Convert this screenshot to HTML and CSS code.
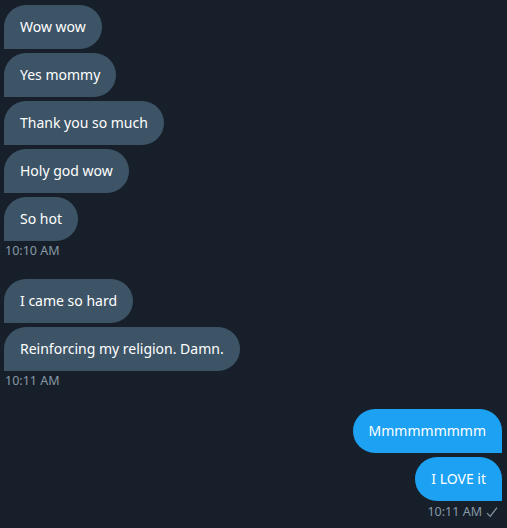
FILE: index.html
```html
<!DOCTYPE html>
<html lang="en">
<head>
  <meta charset="UTF-8">
  <meta name="viewport" content="width=device-width, initial-scale=1.0">
  <title>Messages</title>
  <link rel="stylesheet" href="styles.css">
</head>
<body>
  <div class="chat">
    <div class="group received">
      <div class="bubble">Wow wow</div>
      <div class="bubble">Yes mommy</div>
      <div class="bubble">Thank you so much</div>
      <div class="bubble">Holy god wow</div>
      <div class="bubble">So hot</div>
      <div class="time">10:10 AM</div>
    </div>

    <div class="group received">
      <div class="bubble">I came so hard</div>
      <div class="bubble">Reinforcing my religion. Damn.</div>
      <div class="time">10:11 AM</div>
    </div>

    <div class="group sent">
      <div class="bubble">Mmmmmmmmm</div>
      <div class="bubble">I LOVE it</div>
      <div class="time">10:11 AM
        <svg class="check" viewBox="0 0 12 12" width="12" height="12"><path d="M1 7.2 L4.2 10.4 L11 1.6" fill="none" stroke="currentColor" stroke-width="1.2"/></svg>
      </div>
    </div>
  </div>
</body>
</html>
```

FILE: styles.css
```css
body { margin: 0; background: #17202a; font-family: "Noto Sans", "Open Sans", sans-serif; color: #fff; }
.chat { padding: 5px 5px 0 4px; display: flex; flex-direction: column; gap: 20px; }
.group { display: flex; flex-direction: column; gap: 4px; align-items: flex-start; }
.group.sent { align-items: flex-end; }
.bubble { font-size: 14px; line-height: 20px; padding: 12px 16px; background: #3d5466; border-radius: 22px 22px 22px 0; }
.sent .bubble { background: #1da1f2; border-radius: 22px 22px 0 22px; }
.time { font-size: 12.5px; line-height: 16px; color: #8899a6; margin-top: -2px; padding-left: 1px; display: flex; align-items: center; gap: 4px; }
.sent .time { padding-right: 4px; margin-top: -1px; }
.check { color: #8899a6; }
```
